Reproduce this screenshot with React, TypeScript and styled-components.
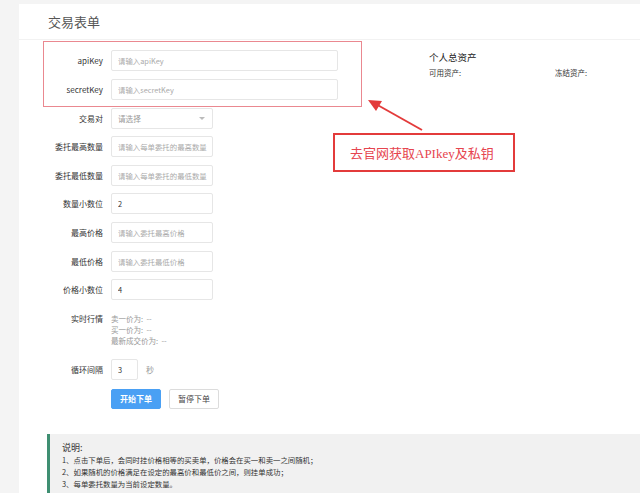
import React from 'react';
import styled, { createGlobalStyle } from 'styled-components';

const GlobalStyle = createGlobalStyle`
	html, body {
		margin: 0;
		padding: 0;
		background: #f4f4f4;
	}
	body {
		font-family: 'Noto Sans CJK SC', 'Liberation Sans', sans-serif;
		color: #333;
	}
`;

const Page = styled.div`
	position: relative;
	width: 640px;
	height: 493px;
	overflow: hidden;
	padding: 4px 0 0 19px;
	box-sizing: border-box;
`;

const Panel = styled.div`
	background: #fff;
	height: 100%;
`;

const Header = styled.div`
	height: 35px;
	border-bottom: 1px solid #f2f2f2;
	display: flex;
	align-items: center;
	padding-left: 29px;
`;

const Title = styled.h1`
	margin: 0;
	font-size: 13px;
	font-weight: 400;
	color: #555;
`;

const Body = styled.div`
	display: flex;
	padding-top: 10px;
`;

const Form = styled.div`
	width: 330px;
	display: flex;
	flex-direction: column;
	gap: 7.6px;
`;

const KeyGroup = styled.div`
	position: relative;
	display: flex;
	flex-direction: column;
	gap: 8px;
	&::before {
		content: '';
		position: absolute;
		top: -9px;
		bottom: -7px;
		left: 24px;
		right: -13px;
		border: 1px solid #ea8890;
		pointer-events: none;
	}
`;

const Row = styled.div<{ $mt?: number }>`
	display: grid;
	grid-template-columns: 84px auto;
	column-gap: 8px;
	align-items: center;
	margin-top: ${(p) => p.$mt ?? 0}px;
`;

const Label = styled.label<{ $top?: boolean }>`
	font-size: 8px;
	color: #333;
	text-align: right;
	align-self: ${(p) => (p.$top ? 'start' : 'center')};
	line-height: ${(p) => (p.$top ? '11px' : 'normal')};
`;

const Input = styled.input<{ $w: number }>`
	box-sizing: border-box;
	width: ${(p) => p.$w}px;
	height: 21px;
	border: 1px solid #e6e6e6;
	border-radius: 2px;
	padding: 0 3px 0 6px;
	font-family: inherit;
	font-size: 7.4px;
	color: #333;
	outline: none;
	&::placeholder {
		color: #aaa;
	}
`;

const Select = styled.div`
	box-sizing: border-box;
	width: 102px;
	height: 21px;
	border: 1px solid #e6e6e6;
	border-radius: 2px;
	padding: 0 6px;
	font-size: 7.6px;
	color: #999;
	display: flex;
	align-items: center;
	justify-content: space-between;
	&::after {
		content: '';
		border-left: 3px solid transparent;
		border-right: 3px solid transparent;
		border-top: 3px solid #bbb;
		margin-right: 1px;
	}
`;

const Quotes = styled.div`
	display: flex;
	flex-direction: column;
	font-size: 7.5px;
	line-height: 11px;
	color: #999;
`;

const Inline = styled.div`
	display: flex;
	align-items: center;
	gap: 8px;
`;

const Unit = styled.span`
	font-size: 8px;
	color: #999;
`;

const Button = styled.button<{ $primary?: boolean }>`
	box-sizing: border-box;
	width: 50px;
	height: 20px;
	border-radius: 2px;
	font-family: inherit;
	font-size: 8px;
	font-weight: ${(p) => (p.$primary ? 600 : 400)};
	padding: 0;
	cursor: pointer;
	color: ${(p) => (p.$primary ? '#fff' : '#444')};
	background: ${(p) => (p.$primary ? '#4aa0f4' : '#fff')};
	border: 1px solid ${(p) => (p.$primary ? '#4aa0f4' : '#dcdcdc')};
`;

const Assets = styled.div`
	margin-left: 80px;
	padding-top: 1px;
`;

const AssetsTitle = styled.div`
	font-size: 9.5px;
	color: #222;
	line-height: 12px;
`;

const AssetsGrid = styled.div`
	display: grid;
	grid-template-columns: 126px auto;
	margin-top: 4px;
	font-size: 7.5px;
	color: #333;
`;

const Note = styled.div`
	margin: 25px 0 0 28px;
	border-left: 3px solid #3f8f72;
	background: #f1f1f1;
	padding: 8px 12px 12px;
	font-size: 7.4px;
	line-height: 12px;
	color: #333;
`;

const NoteTitle = styled.div`
	font-size: 9px;
	line-height: 12px;
`;

const Callout = styled.div`
	position: absolute;
	left: 333px;
	top: 133px;
	width: 182px;
	height: 39px;
	box-sizing: border-box;
	border: 2px solid #e33b3b;
	display: flex;
	align-items: center;
	padding-left: 15px;
	white-space: nowrap;
	font-family: 'Liberation Serif', 'Noto Sans CJK SC', serif;
	font-size: 13px;
	color: #e6454f;
`;

const Arrow = styled.svg`
	position: absolute;
	left: 360px;
	top: 94px;
`;

export default function App() {
	const rows = [
		{ label: '委托最高数量', placeholder: '请输入每单委托的最高数量' },
		{ label: '委托最低数量', placeholder: '请输入每单委托的最低数量' },
		{ label: '数量小数位', value: '2' },
		{ label: '最高价格', placeholder: '请输入委托最高价格' },
		{ label: '最低价格', placeholder: '请输入委托最低价格' },
		{ label: '价格小数位', value: '4' },
	];

	return (
		<Page>
			<GlobalStyle />
			<Panel>
				<Header>
					<Title>交易表单</Title>
				</Header>
				<Body>
					<Form>
						<KeyGroup>
							<Row>
								<Label>apiKey</Label>
								<Input $w={227} placeholder='请输入apiKey' />
							</Row>
							<Row>
								<Label>secretKey</Label>
								<Input $w={227} placeholder='请输入secretKey' />
							</Row>
						</KeyGroup>
						<Row>
							<Label>交易对</Label>
							<Select>请选择</Select>
						</Row>
						{rows.map((r) => (
							<Row key={r.label}>
								<Label>{r.label}</Label>
								<Input
									$w={102}
									placeholder={r.placeholder}
									defaultValue={r.value}
								/>
							</Row>
						))}
						<Row $mt={5}>
							<Label $top>实时行情</Label>
							<Quotes>
								<span>卖一价为:&nbsp;&nbsp;--</span>
								<span>买一价为:&nbsp;&nbsp;--</span>
								<span>最新成交价为:&nbsp;&nbsp;--</span>
							</Quotes>
						</Row>
						<Row $mt={6}>
							<Label>循环间隔</Label>
							<Inline>
								<Input $w={27} defaultValue='3' />
								<Unit>秒</Unit>
							</Inline>
						</Row>
						<Row $mt={1}>
							<span />
							<Inline>
								<Button $primary>开始下单</Button>
								<Button>暂停下单</Button>
							</Inline>
						</Row>
					</Form>
					<Assets>
						<AssetsTitle>个人总资产</AssetsTitle>
						<AssetsGrid>
							<span>可用资产:</span>
							<span>冻结资产:</span>
						</AssetsGrid>
					</Assets>
				</Body>
				<Note>
					<NoteTitle>说明:</NoteTitle>
					<div>1、点击下单后，会同时挂价格相等的买卖单，价格会在买一和卖一之间随机；</div>
					<div>2、如果随机的价格满足在设定的最高价和最低价之间，则挂单成功；</div>
					<div>3、每单委托数量为当前设定数量。</div>
				</Note>
			</Panel>
			<Arrow width='70' height='42' viewBox='0 0 70 42'>
				<line x1='62' y1='36' x2='14' y2='9' stroke='#e33b3b' strokeWidth='2' />
				<polygon points='8,6 22,7 16,17' fill='#e33b3b' />
			</Arrow>
			<Callout>去官网获取APIkey及私钥</Callout>
		</Page>
	);
}
